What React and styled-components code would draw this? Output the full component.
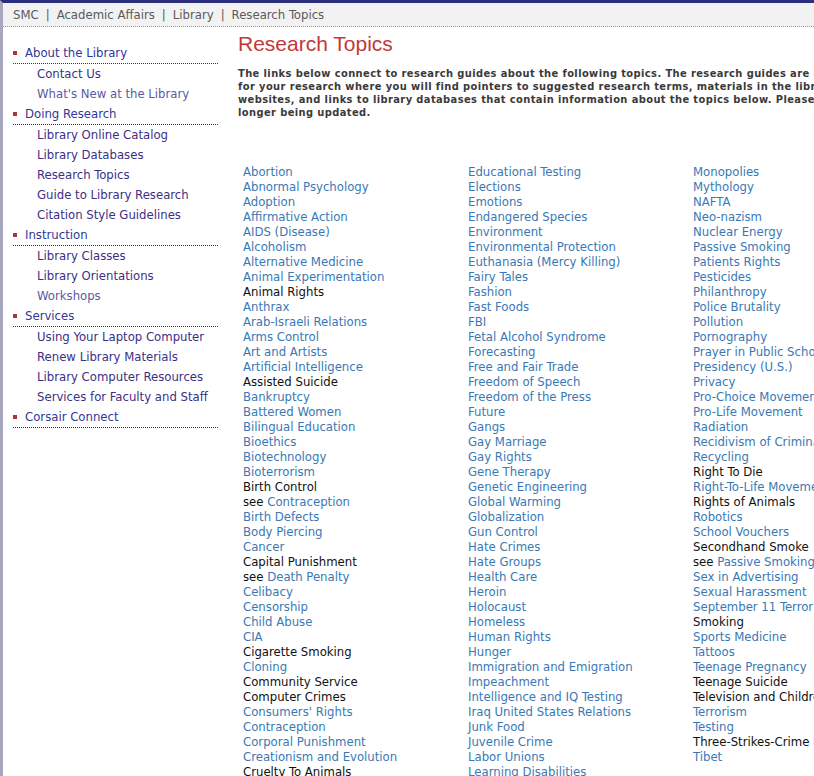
import React from 'react';
import styled, { createGlobalStyle } from 'styled-components';

const GlobalStyle = createGlobalStyle`
  html, body {
    margin: 0;
    padding: 0;
    background: #fff;
    overflow: hidden;
  }
  body {
    font-family: "DejaVu Sans Condensed", "DejaVu Sans", sans-serif;
    font-size: 13px;
  }
`;

const crumbs = ['SMC', 'Academic Affairs', 'Library', 'Research Topics'];

const menu = [
  { title: 'About the Library', items: [['Contact Us'], ["What's New at the Library", true]] },
  {
    title: 'Doing Research',
    items: [['Library Online Catalog'], ['Library Databases'], ['Research Topics'], ['Guide to Library Research'], ['Citation Style Guidelines']],
  },
  { title: 'Instruction', items: [['Library Classes'], ['Library Orientations'], ['Workshops', true]] },
  {
    title: 'Services',
    items: [['Using Your Laptop Computer'], ['Renew Library Materials'], ['Library Computer Resources'], ['Services for Faculty and Staff']],
  },
  { title: 'Corsair Connect', items: [] },
];

// plain string = link, {t} = plain text, {see} = "see" + link
const columns = [
  [
    'Abortion', 'Abnormal Psychology', 'Adoption', 'Affirmative Action', 'AIDS (Disease)', 'Alcoholism',
    'Alternative Medicine', 'Animal Experimentation', { t: 'Animal Rights' }, 'Anthrax', 'Arab-Israeli Relations',
    'Arms Control', 'Art and Artists', 'Artificial Intelligence', { t: 'Assisted Suicide' }, 'Bankruptcy',
    'Battered Women', 'Bilingual Education', 'Bioethics', 'Biotechnology', 'Bioterrorism', { t: 'Birth Control' },
    { see: 'Contraception' }, 'Birth Defects', 'Body Piercing', 'Cancer', { t: 'Capital Punishment' },
    { see: 'Death Penalty' }, 'Celibacy', 'Censorship', 'Child Abuse', 'CIA', { t: 'Cigarette Smoking' }, 'Cloning',
    { t: 'Community Service' }, { t: 'Computer Crimes' }, "Consumers' Rights", 'Contraception',
    'Corporal Punishment', 'Creationism and Evolution', { t: 'Cruelty To Animals' },
  ],
  [
    'Educational Testing', 'Elections', 'Emotions', 'Endangered Species', 'Environment',
    'Environmental Protection', 'Euthanasia (Mercy Killing)', 'Fairy Tales', 'Fashion', 'Fast Foods', 'FBI',
    'Fetal Alcohol Syndrome', 'Forecasting', 'Free and Fair Trade', 'Freedom of Speech', 'Freedom of the Press',
    'Future', 'Gangs', 'Gay Marriage', 'Gay Rights', 'Gene Therapy', 'Genetic Engineering', 'Global Warming',
    'Globalization', 'Gun Control', 'Hate Crimes', 'Hate Groups', 'Health Care', 'Heroin', 'Holocaust',
    'Homeless', 'Human Rights', 'Hunger', 'Immigration and Emigration', 'Impeachment',
    'Intelligence and IQ Testing', 'Iraq United States Relations', 'Junk Food', 'Juvenile Crime',
    'Labor Unions', 'Learning Disabilities',
  ],
  [
    'Monopolies', 'Mythology', 'NAFTA', 'Neo-nazism', 'Nuclear Energy', 'Passive Smoking', 'Patients Rights',
    'Pesticides', 'Philanthropy', 'Police Brutality', 'Pollution', 'Pornography', 'Prayer in Public Schools',
    'Presidency (U.S.)', 'Privacy', 'Pro-Choice Movement', 'Pro-Life Movement', 'Radiation',
    'Recidivism of Criminals', 'Recycling', { t: 'Right To Die' }, 'Right-To-Life Movement',
    { t: 'Rights of Animals' }, 'Robotics', 'School Vouchers', { t: 'Secondhand Smoke' },
    { see: 'Passive Smoking' }, 'Sex in Advertising', 'Sexual Harassment', 'September 11 Terrorist Attacks, 2001',
    { t: 'Smoking' }, 'Sports Medicine', 'Tattoos', 'Teenage Pregnancy', { t: 'Teenage Suicide' },
    { t: 'Television and Children' }, 'Terrorism', 'Testing', { t: 'Three-Strikes-Crime Laws' }, 'Tibet',
  ],
];

function Topic({ entry }) {
  if (typeof entry === 'string') return <TopicRow><TopicLink href="#">{entry}</TopicLink></TopicRow>;
  if (entry.see)
    return (
      <TopicRow>
        see <TopicLink href="#">{entry.see}</TopicLink>
      </TopicRow>
    );
  return <TopicRow>{entry.t}</TopicRow>;
}

export default function App() {
  return (
    <>
      <GlobalStyle />
      <Page>
        <Breadcrumb>
          {crumbs.map((c, i) => (
            <React.Fragment key={c}>
              {i > 0 && <Sep>|</Sep>}
              <Crumb href="#">{c}</Crumb>
            </React.Fragment>
          ))}
        </Breadcrumb>
        <Body>
          <Sidebar>
            {menu.map((section) => (
              <Section key={section.title}>
                <SectionTitle href="#">{section.title}</SectionTitle>
                {section.items.map(([label, visited]) => (
                  <SubLink key={label} href="#" $visited={visited}>
                    {label}
                  </SubLink>
                ))}
              </Section>
            ))}
          </Sidebar>
          <Main>
            <Heading>Research Topics</Heading>
            <Intro>
              The links below connect to research guides about the following topics. The research guides are a good starting point
              <br />
              for your research where you will find pointers to suggested research terms, materials in the library, useful
              <br />
              websites, and links to library databases that contain information about the topics below. Please note that these guides are no
              <br />
              longer being updated.
            </Intro>
            <TopicGrid>
              {columns.map((col, i) => (
                <TopicColumn key={i}>
                  {col.map((entry, j) => (
                    <Topic key={j} entry={entry} />
                  ))}
                </TopicColumn>
              ))}
            </TopicGrid>
          </Main>
        </Body>
      </Page>
    </>
  );
}

const Page = styled.div`
  min-height: 776px;
  border-left: 3px solid #a9a6c0;
  border-top: 3px solid #2b2f7c;
  box-sizing: border-box;
`;

const Breadcrumb = styled.div`
  background: #f2f2f2;
  border-bottom: 1px dotted #9a9a9a;
  height: 23px;
  padding-left: 10px;
  display: flex;
  align-items: center;
  color: #5a5a5a;
  white-space: nowrap;
`;

const Crumb = styled.a`
  color: #5a5a5a;
  text-decoration: none;
`;

const Sep = styled.span`
  margin: 0 7px;
`;

const Body = styled.div`
  display: flex;
  align-items: flex-start;
  gap: 20px;
  padding-left: 10px;
`;

const Sidebar = styled.nav`
  width: 205px;
  flex: none;
  padding-top: 16px;
`;

const Section = styled.div`
  display: flex;
  flex-direction: column;
`;

const SectionTitle = styled.a`
  position: relative;
  display: block;
  height: 20px;
  line-height: 20px;
  padding-left: 12px;
  border-bottom: 1px dotted #2b2f7c;
  color: #30379a;
  text-decoration: none;

  &::before {
    content: '';
    position: absolute;
    left: 0;
    top: 8px;
    width: 4px;
    height: 4px;
    background: #b03434;
  }
`;

const SubLink = styled.a`
  display: block;
  height: 20px;
  line-height: 20px;
  padding-left: 24px;
  color: ${(p) => (p.$visited ? '#5c5aa2' : '#3b2f86')};
  text-decoration: none;
`;

const Main = styled.main`
  flex: none;
  width: 700px;
`;

const Heading = styled.h1`
  margin: 5px 0 0;
  font-family: "Liberation Sans", Arial, sans-serif;
  font-weight: normal;
  font-size: 21px;
  line-height: 24px;
  color: #c2383a;
`;

const Intro = styled.p`
  margin: 11px 0 0;
  font-size: 11px;
  font-weight: bold;
  letter-spacing: 0.4px;
  line-height: 13px;
  color: #3a3a3a;
  white-space: nowrap;
`;

const TopicGrid = styled.div`
  display: grid;
  grid-template-columns: repeat(3, 225px);
  margin-top: 45px;
  padding-left: 5px;
`;

const TopicColumn = styled.div`
  display: flex;
  flex-direction: column;
`;

const TopicRow = styled.div`
  line-height: 15px;
  color: #111;
`;

const TopicLink = styled.a`
  color: #3a78b5;
  text-decoration: none;
`;
